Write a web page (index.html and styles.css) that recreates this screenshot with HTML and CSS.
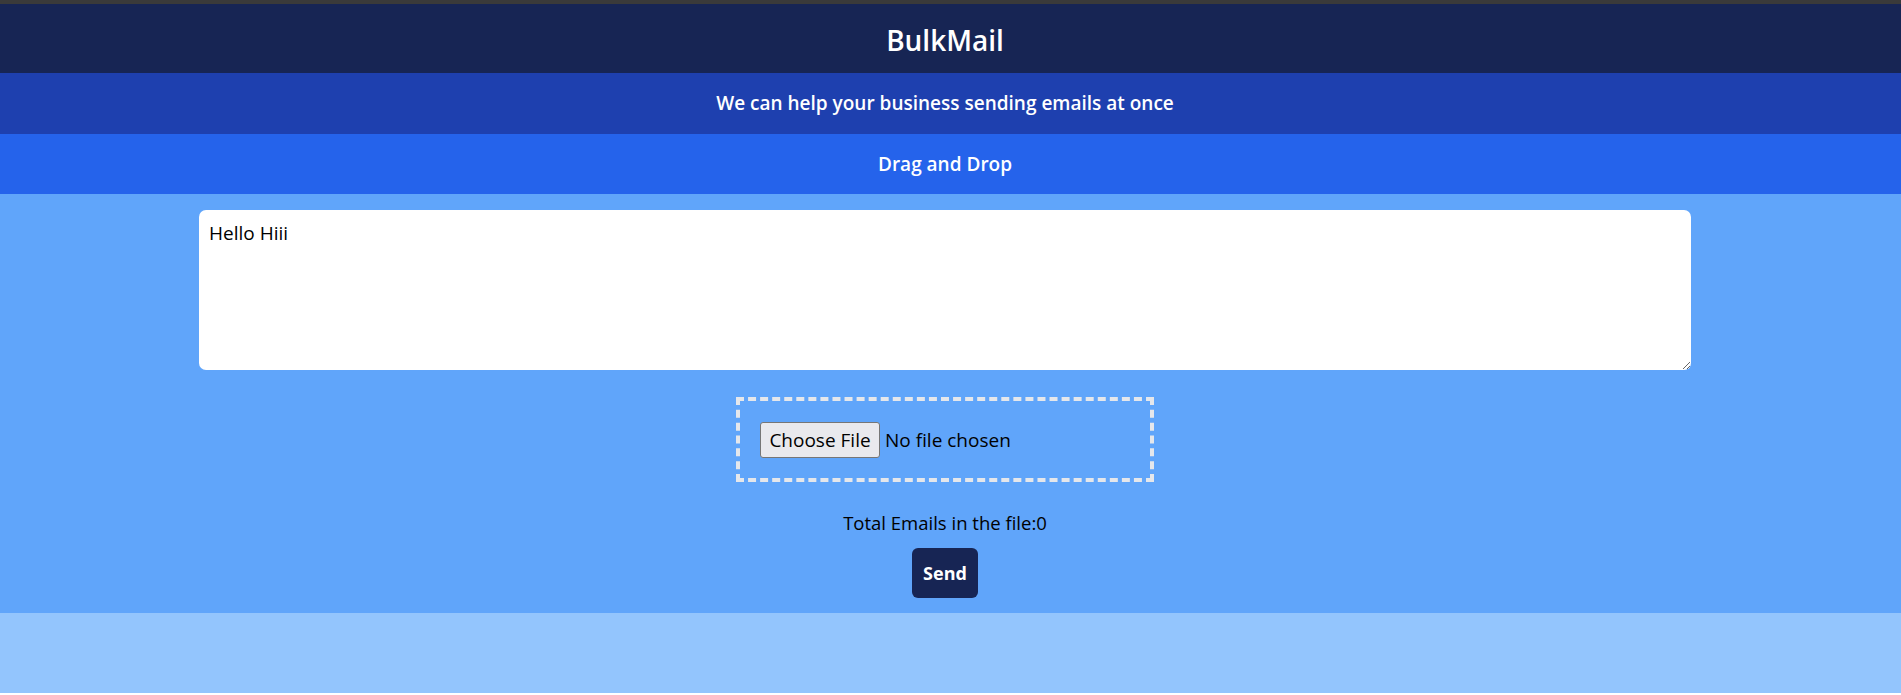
FILE: index.html
```html
<!DOCTYPE html>
<html lang="en">
<head>
<meta charset="utf-8">
<title>BulkMail</title>
<link rel="stylesheet" href="styles.css">
</head>
<body>
  <div class="topline"></div>
  <header class="band band-title"><h1>BulkMail</h1></header>
  <div class="band band-sub"><p>We can help your business sending emails at once</p></div>
  <div class="band band-drag"><p>Drag and Drop</p></div>
  <main class="band band-main">
    <textarea class="message">Hello Hiii</textarea>
    <div class="dropzone">
      <label class="file-btn">Choose File<input type="file" class="file-input"></label>
      <span class="file-name">No file chosen</span>
    </div>
    <p class="count">Total Emails in the file:0</p>
    <button class="send">Send</button>
  </main>
  <footer class="band band-foot"></footer>
</body>
</html>
```
FILE: styles.css
```css
* { box-sizing: border-box; }
html, body { margin: 0; padding: 0; background: #ffffff; }
body { font-family: "Open Sans", "Noto Sans", sans-serif; color: #000; }

.topline { height: 4px; background: #3a3a3a; }

.band { text-align: center; padding-right: 11px; }

.band-title { background: #172554; color: #fff; padding-top: 18px; padding-bottom: 14px; }
.band-title h1 { margin: 0; font-size: 28px; font-weight: 600; line-height: 37px; }

.band-sub { background: #1e40af; color: #fff; padding-top: 16px; padding-bottom: 16px; }
.band-sub p { margin: 0; font-size: 19px; font-weight: 600; line-height: 29px; }

.band-drag { background: #2563eb; color: #fff; padding-top: 16px; padding-bottom: 16px; }
.band-drag p { margin: 0; font-size: 19px; font-weight: 600; line-height: 28px; }

.band-main {
  background: #60a5fa;
  padding-top: 16px;
  padding-bottom: 15px;
  display: flex;
  flex-direction: column;
  align-items: center;
}

.message {
  display: block;
  width: 1492px;
  height: 160px;
  border: none;
  border-radius: 7px;
  padding: 10px;
  font-family: inherit;
  font-size: 19px;
  line-height: 26px;
  color: #000;
  background: #fff;
  resize: vertical;
  outline: none;
}

.dropzone {
  margin-top: 27px;
  width: 418px;
  height: 85px;
  border: 4px dashed #e5e7eb;
  padding: 20px;
  display: flex;
  align-items: center;
  font-size: 19px;
}

.file-btn {
  display: inline-flex;
  align-items: center;
  justify-content: center;
  width: 120px;
  height: 36px;
  background: #e9e9ed;
  border: 1px solid #767676;
  border-radius: 3px;
  font-size: 19px;
  color: #000;
  margin-right: 5px;
}
.file-input { display: none; }

.file-name { font-size: 19px; }

.count {
  margin: 29px 0 0;
  font-size: 18.5px;
  line-height: 24px;
}

.send {
  margin-top: 13px;
  width: 66px;
  height: 50px;
  background: #172554;
  color: #fff;
  border: none;
  border-radius: 6px;
  font-family: inherit;
  font-size: 18px;
  font-weight: 700;
  padding: 0;
}

.band-foot { background: #93c5fd; height: 80px; }
```
